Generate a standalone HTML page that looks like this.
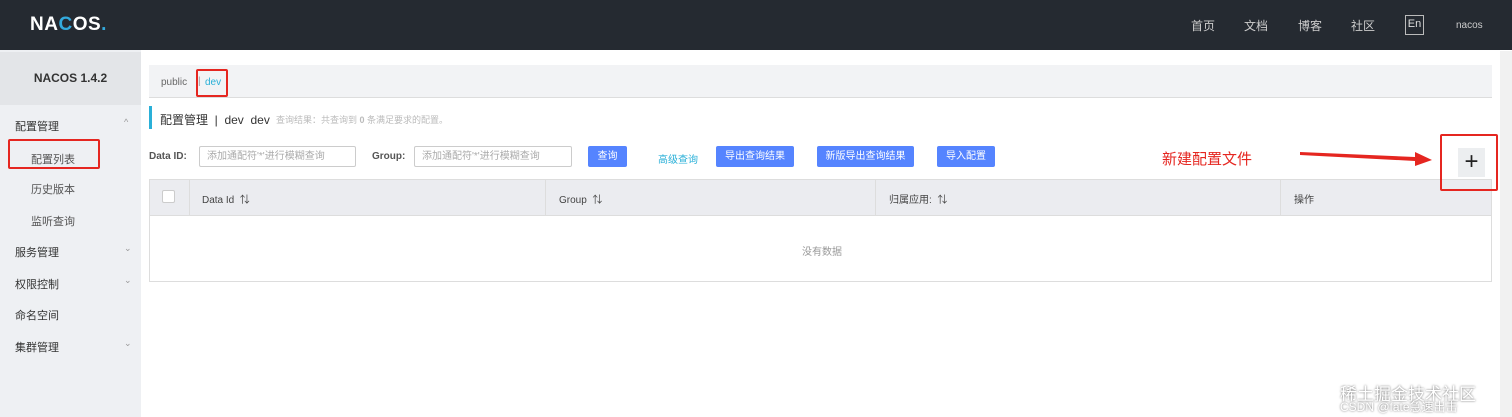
<!DOCTYPE html>
<html><head><meta charset="utf-8"><style>
*{margin:0;padding:0;box-sizing:border-box}
body{width:1512px;height:417px;overflow:hidden;background:#fff;font-family:"Liberation Sans","Noto Sans CJK SC",sans-serif;position:relative;font-size:12px;color:#333}
.a{position:absolute}
.hdr{left:0;top:0;width:1512px;height:50px;background:#252a31}
.nav{color:#ccc;font-size:12px;top:17px}
.side{left:0;top:50px;width:141px;height:367px;background:#eef0f3}
.sideT{left:0;top:52px;width:141px;height:53px;background:#e3e5e8;text-align:center;line-height:53px;font-weight:bold;font-size:12px;color:#333}
.si{left:15px;font-size:11px;color:#333;font-weight:normal}
.sub{left:31px;font-size:11px;color:#555}
.chev{left:124px;font-size:9px;color:#999}
.btn{background:#5584ff;color:#fff;font-size:10px;height:21px;line-height:21px;text-align:center;border-radius:2px;top:146px}
.inp{border:1px solid #ccc;border-radius:2px;height:21px;top:146px;font-size:10px;color:#aaa;line-height:19px;padding-left:7px}
.red{border:2px solid #e52620;border-radius:2px;z-index:5}
</style></head><body>
<div class="a hdr"></div>
<div class="a" style="left:30px;top:14px;font-size:19px;font-weight:bold;color:#fff;letter-spacing:0.5px">NA<span style="color:#3ad">C</span>OS<span style="color:#3ad">.</span></div>
<div class="a nav" style="left:1191px">首页</div>
<div class="a nav" style="left:1244px">文档</div>
<div class="a nav" style="left:1298px">博客</div>
<div class="a nav" style="left:1351px">社区</div>
<div class="a" style="left:1405px;top:15px;width:19px;height:20px;border:1px solid #bbb;color:#ddd;font-size:11px;text-align:center;line-height:17px">En</div>
<div class="a nav" style="left:1456px;top:20px;font-size:10px">nacos</div>
<div class="a side"></div>
<div class="a sideT">NACOS 1.4.2</div>
<div class="a si" style="top:118px">配置管理</div><div class="a chev" style="top:117px">^</div>
<div class="a sub" style="top:151px">配置列表</div>
<div class="a red" style="left:8px;top:139px;width:92px;height:30px"></div>
<div class="a sub" style="top:181px">历史版本</div>
<div class="a sub" style="top:213px">监听查询</div>
<div class="a si" style="top:244px">服务管理</div><div class="a chev" style="top:243px">⌄</div>
<div class="a si" style="top:276px">权限控制</div><div class="a chev" style="top:275px">⌄</div>
<div class="a si" style="top:307px">命名空间</div>
<div class="a si" style="top:339px">集群管理</div><div class="a chev" style="top:338px">⌄</div>
<div class="a" style="left:149px;top:65px;width:1343px;height:33px;background:#f2f3f5;border-bottom:1px solid #ddd"></div>
<div class="a" style="left:161px;top:77px;font-size:10px;color:#666">public</div>
<div class="a" style="left:198px;top:76px;font-size:10px;color:#999">|</div>
<div class="a" style="left:205px;top:77px;font-size:10px;color:#2ab0d8">dev</div>
<div class="a red" style="left:196px;top:69px;width:32px;height:28px"></div>
<div class="a" style="left:149px;top:106px;width:3px;height:23px;background:#2ab0d8"></div>
<div class="a" style="left:160px;top:111px;font-size:12px;color:#333">配置管理 &nbsp;|&nbsp; dev&nbsp; dev</div>
<div class="a" style="left:276px;top:113px;font-size:9px;color:#bbb">查询结果：共查询到 <b>0</b> 条满足要求的配置。</div>
<div class="a" style="left:149px;top:151px;font-size:10px;font-weight:bold;color:#555">Data ID:</div>
<div class="a inp" style="left:199px;width:157px">添加通配符'*'进行模糊查询</div>
<div class="a" style="left:372px;top:151px;font-size:10px;font-weight:bold;color:#555">Group:</div>
<div class="a inp" style="left:414px;width:158px">添加通配符'*'进行模糊查询</div>
<div class="a btn" style="left:588px;width:39px">查询</div>
<div class="a" style="left:658px;top:151px;font-size:10px;color:#2ab0d8">高级查询</div>
<div class="a btn" style="left:716px;width:78px">导出查询结果</div>
<div class="a btn" style="left:817px;width:97px">新版导出查询结果</div>
<div class="a btn" style="left:937px;width:58px">导入配置</div>
<div class="a" style="left:1162px;top:148px;font-size:15px;color:#e52620;font-family:'Noto Sans CJK SC',sans-serif">新建配置文件</div>
<svg class="a" style="left:1300px;top:148px" width="140" height="20"><polygon points="0,4 115,9 115,4 132,12 115,18 115,13 0,7" fill="#e52620"/></svg>
<div class="a" style="left:149px;top:179px;width:1343px;height:103px;border:1px solid #ddd"></div>
<div class="a" style="left:150px;top:180px;width:1341px;height:36px;background:#ebecf0;border-bottom:1px solid #ddd"></div>
<div class="a" style="left:1458px;top:148px;width:27px;height:29px;background:#eceef0;font-size:24px;line-height:27px;text-align:center;color:#222;z-index:4">+</div>
<div class="a red" style="left:1440px;top:134px;width:58px;height:57px"></div>
<div class="a" style="left:162px;top:190px;width:13px;height:13px;background:#fff;border:1px solid #ccc;border-radius:2px"></div>
<div class="a" style="left:189px;top:180px;width:1px;height:36px;background:#ddd"></div>
<div class="a" style="left:545px;top:180px;width:1px;height:36px;background:#ddd"></div>
<div class="a" style="left:875px;top:180px;width:1px;height:36px;background:#ddd"></div>
<div class="a" style="left:1280px;top:180px;width:1px;height:36px;background:#ddd"></div>
<div class="a" style="left:202px;top:191px;font-size:10px;color:#444">Data Id &nbsp;⇅</div>
<div class="a" style="left:559px;top:191px;font-size:10px;color:#444">Group &nbsp;⇅</div>
<div class="a" style="left:889px;top:191px;font-size:10px;color:#444">归属应用: &nbsp;⇅</div>
<div class="a" style="left:1294px;top:191px;font-size:10px;color:#444">操作</div>
<div class="a" style="left:802px;top:243px;font-size:10px;color:#999">没有数据</div>
<div class="a" style="left:1500px;top:51px;width:12px;height:366px;background:#f1f1f1"></div>
<div class="a" style="left:1340px;top:380px;font-size:17px;color:#fff;text-shadow:0 0 2px #666">稀土掘金技术社区</div>
<div class="a" style="left:1340px;top:398px;font-size:12px;color:#fff;text-shadow:0 0 2px #666">CSDN @fate急速出击</div>
</body></html>
